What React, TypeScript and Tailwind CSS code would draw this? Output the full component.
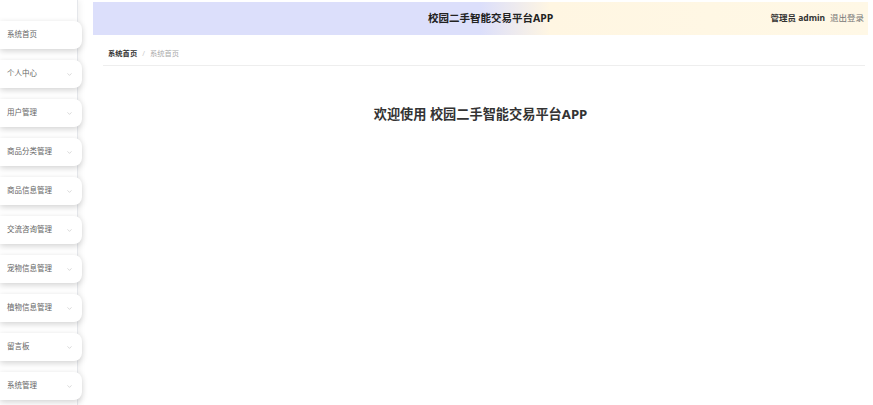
import { ChevronDown } from 'lucide-react'

const menus = [
  { name: '系统首页', sub: false },
  { name: '个人中心', sub: true },
  { name: '用户管理', sub: true },
  { name: '商品分类管理', sub: true },
  { name: '商品信息管理', sub: true },
  { name: '交流咨询管理', sub: true },
  { name: '宠物信息管理', sub: true },
  { name: '植物信息管理', sub: true },
  { name: '留言板', sub: true },
  { name: '系统管理', sub: true },
]

export default function App() {
  return (
    <div
      className="flex h-[405px] w-[873px] overflow-hidden bg-white"
      style={{ fontFamily: '"Noto Sans", "Noto Sans CJK SC", sans-serif' }}
    >
      <aside className="w-[78px] shrink-0 border-r border-gray-200 shadow-[2px_0_6px_rgba(0,0,0,0.06)] pt-[21px] flex flex-col gap-[11px]">
        {menus.map((m) => (
          <div
            key={m.name}
            className="w-[82px] h-[28px] shrink-0 bg-white rounded-r-[8px] shadow-[0_2px_6px_rgba(0,0,0,0.18)] flex items-center justify-between pl-[7px] pr-[9px] relative z-10"
          >
            <span className="text-[7.5px] text-[#666] whitespace-nowrap">{m.name}</span>
            {m.sub && <ChevronDown className="w-[7px] h-[7px] text-[#aaa]" strokeWidth={1.5} />}
          </div>
        ))}
      </aside>

      <main className="flex-1 pl-[15px] pr-[5px] pt-[2px]">
        <header className="h-[33px] flex items-center bg-[linear-gradient(90deg,#dcdffb_0%,#dcdffb_50%,#fff6e2_59%,#fff8e6_100%)] pr-[4px]">
          <div className="flex-1 text-center text-[10.5px] font-bold text-[#222] pl-[118px]">校园二手智能交易平台APP</div>
          <div className="text-[8.5px] whitespace-nowrap">
            <span className="font-bold text-[#333]">管理员 admin</span>
            <span className="ml-[5px] text-[#777]">退出登录</span>
          </div>
        </header>

        <nav className="ml-[10px] mr-[3px] mt-[13px] pl-[5px] pb-[6px] border-b border-[#eee] text-[7.3px] flex items-center gap-[5px]">
          <span className="font-bold text-[#333]">系统首页</span>
          <span className="text-[#ccc]">/</span>
          <span className="text-[#aaa]">系统首页</span>
        </nav>

        <h1 className="mt-[39px] text-center text-[13.2px] font-bold text-[#333]">
          欢迎使用 校园二手智能交易平台APP
        </h1>
      </main>
    </div>
  )
}
